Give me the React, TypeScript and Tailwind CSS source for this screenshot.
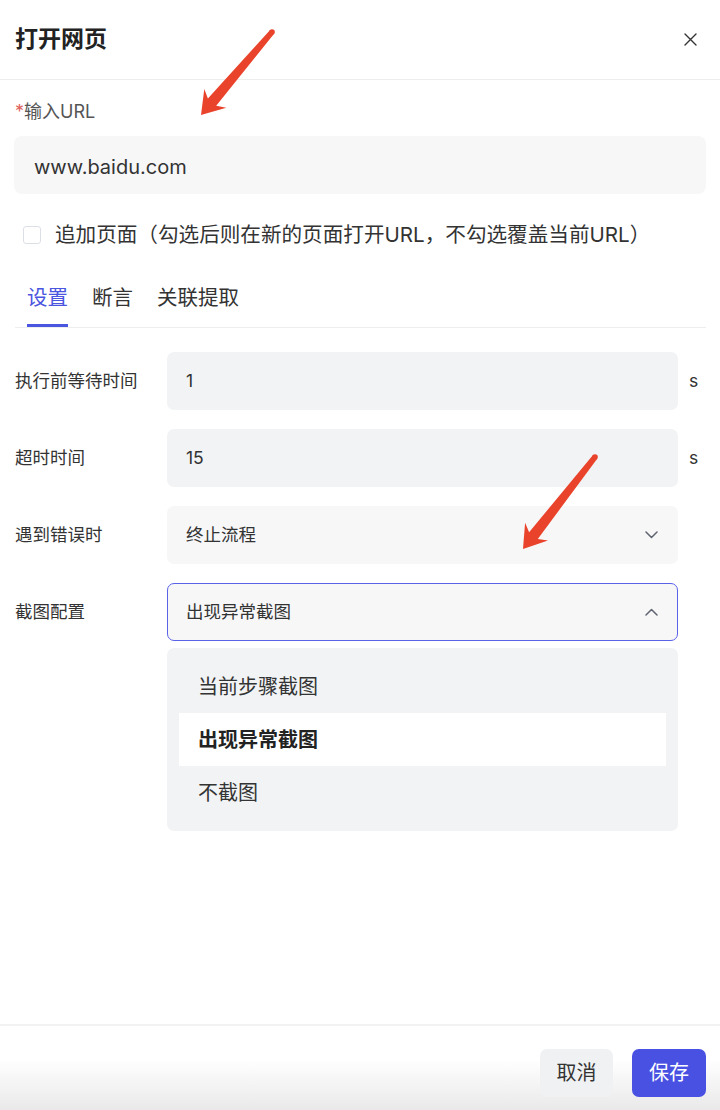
import React from 'react';

const FONT = { fontFamily: 'Inter, "Noto Sans CJK SC", sans-serif' };

type Pt = [number, number];

// annotation arrow polygon, computed from tail and tip
function arrowPoints(tail: Pt, tip: Pt) {
  const [x1, y1] = tail;
  const dx = tip[0] - x1;
  const dy = tip[1] - y1;
  const L = Math.hypot(dx, dy);
  const ux = dx / L;
  const uy = dy / L;
  const nx = -uy;
  const ny = ux;
  const p = (s: number, w: number) => `${(x1 + ux * s + nx * w).toFixed(1)},${(y1 + uy * s + ny * w).toFixed(1)}`;
  return [p(0, -2.8), p(L - 17, -5.5), p(L - 22, -14.5), p(L, 0), p(L - 22, 14.5), p(L - 17, 5.5), p(0, 2.8)].join(' ');
}

function Chevron({ up = false }: { up?: boolean }) {
  return (
    <svg width="13" height="8" viewBox="0 0 13 8" className="shrink-0">
      <polyline
        points={up ? '1,7 6.5,1.5 12,7' : '1,1 6.5,6.5 12,1'}
        fill="none"
        stroke="#5f6470"
        strokeWidth="1.5"
        strokeLinecap="round"
        strokeLinejoin="round"
      />
    </svg>
  );
}

const TABS = ['设置', '断言', '关联提取'];
const SHOT_OPTIONS = ['当前步骤截图', '出现异常截图', '不截图'];

export default function App() {
  const arrows: [Pt, Pt][] = [
    [[272, 32], [201, 115]],
    [[595, 457], [523, 549]],
  ];

  return (
    <div className="relative w-[720px] h-[1110px] bg-white flex flex-col text-[#333]" style={FONT}>
      {/* Header */}
      <div className="h-[80px] shrink-0 flex items-center justify-between pl-[15px] pr-[23px] border-b border-[#ededed]">
        <span className="text-[23px] font-bold text-[#222] leading-none">打开网页</span>
        <svg width="13" height="13" viewBox="0 0 13 13">
          <path d="M1 1 L12 12 M12 1 L1 12" stroke="#333" strokeWidth="1.4" strokeLinecap="round" />
        </svg>
      </div>

      {/* Body */}
      <div className="flex-1 px-[14px]">
        <div className="pt-[21px] pl-px text-[18px] leading-[22px] text-[#555]">
          <span className="text-[#e0625c]">*</span>输入URL
        </div>
        <div className="mt-[13px] h-[58px] rounded-[8px] bg-[#f7f7f8] pl-[20px] pr-[20px] pt-[3px] flex items-center text-[20px] text-[#333]">
          www.baidu.com
        </div>

        <div className="mt-[29px] h-[24px] flex items-center pl-[9px]">
          <span className="w-[18px] h-[18px] rounded-[3px] border-[1.5px] border-[#dcdfe6] bg-white shrink-0" />
          <span className="ml-[14px] text-[20.6px] leading-[24px] text-[#333]">
            追加页面（勾选后则在新的页面打开URL，不勾选覆盖当前URL）
          </span>
        </div>

        {/* Tabs */}
        <div className="mt-[40px] ml-px flex gap-[24px] pl-[12px] border-b border-[#eeeeee]">
          {TABS.map((t, i) => (
            <div key={t} className="flex flex-col">
              <span className={`text-[20.5px] leading-[22px] ${i === 0 ? 'text-[#4a55e0]' : 'text-[#333]'}`}>{t}</span>
              <span className={`mt-[15px] h-[3px] ${i === 0 ? 'bg-[#4a55e0]' : 'bg-transparent'}`} />
            </div>
          ))}
        </div>

        {/* Form */}
        <div className="mt-[24px] flex flex-col gap-[19px] text-[17.5px]">
          <div className="flex items-center">
            <span className="w-[153px] pl-px text-[#333]">执行前等待时间</span>
            <div className="w-[511px] h-[58px] rounded-[7px] bg-[#f2f3f5] px-[19px] flex items-center">1</div>
            <span className="ml-[11px] text-[#333]">s</span>
          </div>
          <div className="flex items-center">
            <span className="w-[153px] pl-px text-[#333]">超时时间</span>
            <div className="w-[511px] h-[58px] rounded-[7px] bg-[#f2f3f5] px-[19px] flex items-center">15</div>
            <span className="ml-[11px] text-[#333]">s</span>
          </div>
          <div className="flex items-center">
            <span className="w-[153px] pl-px text-[#333]">遇到错误时</span>
            <div className="w-[511px] h-[58px] rounded-[7px] bg-[#f7f7f8] pl-[19px] pr-[20px] flex items-center justify-between">
              <span>终止流程</span>
              <Chevron />
            </div>
          </div>
          <div className="flex items-center">
            <span className="w-[153px] pl-px text-[#333]">截图配置</span>
            <div className="relative w-[511px]">
              <div className="h-[58px] rounded-[7px] bg-[#f7f7f8] border-[1.5px] border-[#5a62ea] pl-[18px] pr-[19px] flex items-center justify-between">
                <span>出现异常截图</span>
                <Chevron up />
              </div>
              {/* Dropdown menu */}
              <div className="absolute left-0 right-0 top-full mt-[7px] rounded-[7px] bg-[#f2f3f5] p-[12px] flex flex-col">
                {SHOT_OPTIONS.map((o, i) => (
                  <div
                    key={o}
                    className={`h-[53px] pl-[19px] flex items-center text-[20px] ${i === 1 ? 'bg-white font-bold text-[#222]' : 'text-[#333]'}`}
                  >
                    {o}
                  </div>
                ))}
              </div>
            </div>
          </div>
        </div>
      </div>

      {/* Footer */}
      <div className="h-[86px] shrink-0 border-t-2 border-[#f2f2f2] bg-gradient-to-b from-white from-40% to-[#e9e9e9] flex justify-end items-start pt-[23px] pr-[14px] gap-[19px]">
        <button type="button" className="w-[73px] h-[48px] rounded-[7px] bg-[#f0f1f3] text-[20px] text-[#333]">
          取消
        </button>
        <button type="button" className="w-[74px] h-[48px] rounded-[7px] bg-[#4851e2] text-[20px] text-white">
          保存
        </button>
      </div>

      {/* Annotation arrows */}
      <svg className="absolute inset-0 pointer-events-none" width="720" height="1110">
        {arrows.map(([tail, tip], i) => (
          <g key={i} fill="#e9432b">
            <polygon points={arrowPoints(tail, tip)} strokeLinejoin="round" />
            <circle cx={tail[0]} cy={tail[1]} r="2.8" />
          </g>
        ))}
      </svg>
    </div>
  );
}
